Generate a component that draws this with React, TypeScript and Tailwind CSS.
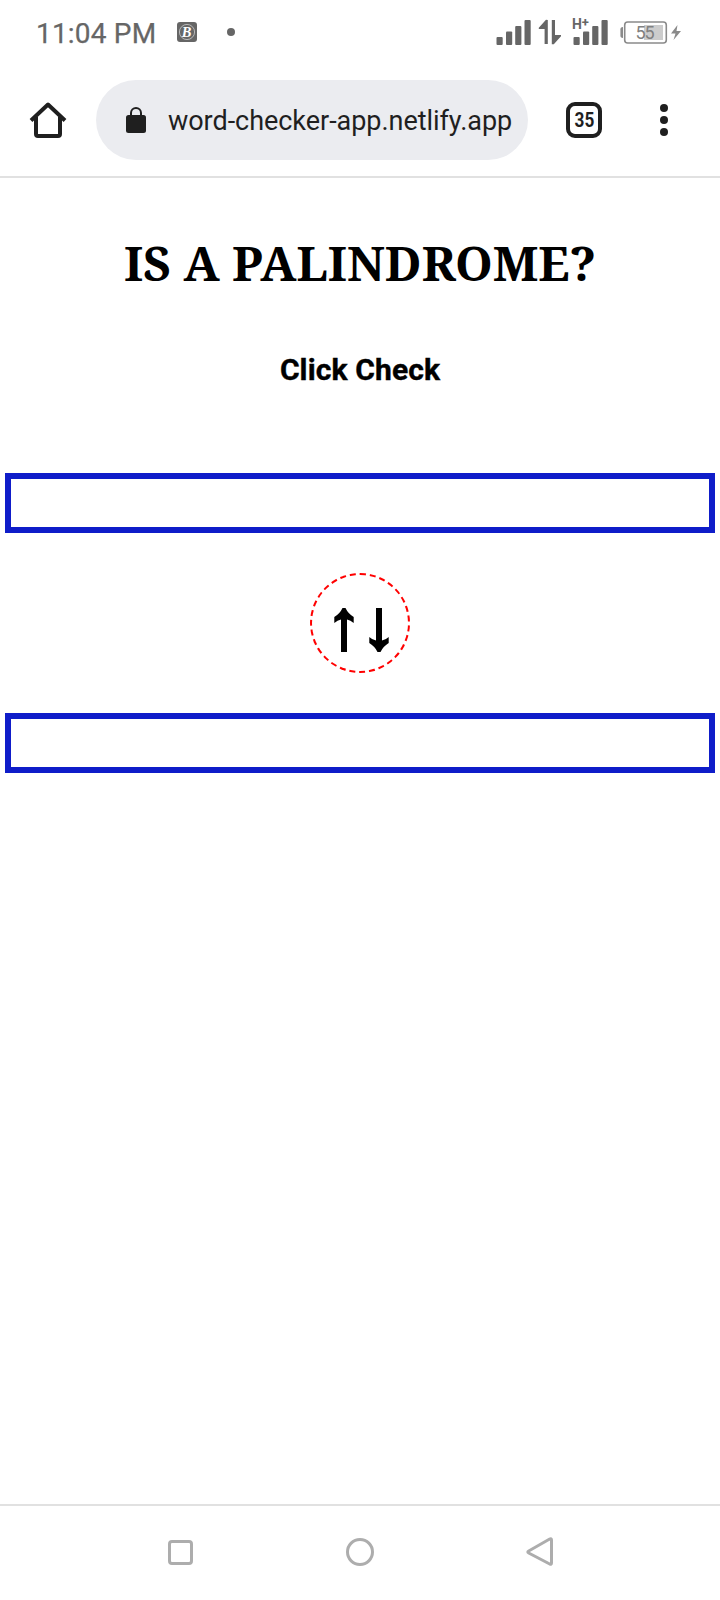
import React from "react";

function StatusBar() {
  return (
    <div className="flex h-16 items-center text-[#666]">
      <span className="ml-[36px] w-[121px] whitespace-nowrap pt-[3px] text-[28px] leading-[64px] tracking-[0.2px] [-webkit-text-stroke:0.25px_#666]">11:04 PM</span>
      <svg className="ml-[20px] shrink-0" width="20" height="64" viewBox="177 0 20 64">
        <rect x="177" y="22" width="20" height="20" rx="3" fill="#666" />
        <circle cx="187" cy="32" r="7.6" fill="none" stroke="#ccc" strokeWidth="0.8" />
        <text x="186.6" y="37" textAnchor="middle" fontSize="14.5" fontStyle="italic" fontWeight="bold" fontFamily="Liberation Serif, serif" fill="#fff">B</text>
      </svg>
      <span className="ml-[30px] h-2 w-2 rounded-full bg-[#666]" />
      <svg className="ml-[261px] shrink-0" width="36" height="64" viewBox="496 0 36 64" fill="#666">
        <SignalBars x={496.5} />
      </svg>
      <svg className="ml-[6px] shrink-0" width="24" height="64" viewBox="538 0 24 64" fill="#666">
        <path d="M547.8 20v24h-3.2V29h-5.8v-1.2l7.2-8zM551.8 20h3.2v15h6v1.2l-7.2 8h-2z" />
      </svg>
      <svg className="ml-[10px] shrink-0" width="38" height="64" viewBox="572 0 38 64" fill="#666">
        <SignalBars x={573.5} />
        <text x="572" y="29.3" fontSize="14" fontWeight="bold" fontFamily="Roboto, sans-serif">H</text>
        <text x="581.8" y="27" fontSize="13" fontWeight="bold" fontFamily="Roboto, sans-serif">+</text>
      </svg>
      <svg className="ml-[9px] shrink-0" width="64" height="64" viewBox="619 0 64 64" fill="#8a8a8a">
        <path d="M623 27v11c-2 0-2.6-1-2.6-2.5v-6c0-1.5.6-2.5 2.6-2.5z" />
        <rect x="624.7" y="22" width="41.6" height="21" rx="3" fill="#fff" stroke="#8a8a8a" strokeWidth="1.6" />
        <rect x="644" y="25" width="19" height="15" fill="#ccc" />
        <text x="635.5" y="39" fontSize="18" fontFamily="Roboto, sans-serif" textLength="19" fill="#808080">55</text>
        <path d="M677.5 25l-6.5 8.5h4.5l-2 6.5 7.5-9h-4.5z" />
      </svg>
    </div>
  );
}

function SignalBars({ x }: { x: number }) {
  return (
    <>
      <rect x={x} y="37" width="6.2" height="8" rx="1" />
      <rect x={x + 9.5} y="31.5" width="6.2" height="13.5" rx="1" />
      <rect x={x + 18.7} y="26" width="6.2" height="19" rx="1" />
      <rect x={x + 28} y="20" width="6.2" height="25" rx="1" />
    </>
  );
}

function Toolbar() {
  return (
    <div className="flex h-[114px] items-start border-b-2 border-[#e1e1e1] pt-4 text-[#1f1f1f]">
      <svg className="ml-[28px] shrink-0" width="40" height="80" viewBox="28 80 40 80" fill="none" stroke="#1f1f1f" strokeWidth="4" strokeLinejoin="round">
        <path d="M31 120.5L48 104.5L65 120.5M36 117v17q0 2 2 2h20q2 0 2-2V117" />
      </svg>
      <div className="ml-[28px] flex h-20 w-[432px] items-center rounded-full bg-[#ebecf0]">
        <svg className="ml-[30px] shrink-0" width="20" height="28" viewBox="0 0 20 28">
          <rect y="9" width="20" height="18" rx="2.5" fill="#1f1f1f" />
          <path d="M5 10V7a5 5 0 0 1 10 0v3" fill="none" stroke="#1f1f1f" strokeWidth="2" />
        </svg>
        <span className="ml-[22px] whitespace-nowrap pt-[2px] text-[27px] tracking-[-0.04px]">word-checker-app.netlify.app</span>
      </div>
      <div className="ml-[38px] mt-[22px] flex h-9 w-9 items-center justify-center rounded-[9px] border-4 border-[#1f1f1f] text-[20px] font-bold leading-none">
        <span className="inline-block scale-x-[0.86]">35</span>
      </div>
      <div className="ml-[58px] mt-[24px] flex flex-col gap-1">
        <span className="h-2 w-2 rounded-full bg-[#1f1f1f]" />
        <span className="h-2 w-2 rounded-full bg-[#1f1f1f]" />
        <span className="h-2 w-2 rounded-full bg-[#1f1f1f]" />
      </div>
    </div>
  );
}

export default function App() {
  return (
    <div className="flex h-[1600px] w-[720px] flex-col overflow-hidden bg-white font-['Roboto',sans-serif]">
      <StatusBar />
      <Toolbar />
      <main className="flex flex-1 flex-col items-center text-black">
        <h1 className="mt-[53px] h-[64px] whitespace-nowrap font-['Noto_Serif','Liberation_Serif',serif] text-[48px] font-bold leading-[64px]">IS A PALINDROME?</h1>
        <p className="mt-[55px] h-[40px] text-[30px] font-bold leading-[40px] tracking-[0.12px] [-webkit-text-stroke:0.4px_#000]">Click Check</p>
        <input className="mt-[83px] h-[60px] w-[710px] border-[6px] border-[#0f1dc9] outline-none" />
        <button className="mt-[40px] h-[100px] w-[100px] rounded-full border-2 border-dashed border-[#f00]">
          <svg width="96" height="96" viewBox="312 575 96 96">
            <path d="M341 652V619.5Q337.5 620 334.3 623V617Q340 613.5 342.5 608H345.5Q348 613.5 353.7 617V623Q350.5 620 347 619.5V652z" />
            <path d="M376 608V640.5Q372.5 640 369.3 637V643Q375 646.5 377.5 652H380.5Q383 646.5 388.7 643V637Q385.5 640 382 640.5V608z" />
          </svg>
        </button>
        <input className="mt-[40px] h-[60px] w-[710px] border-[6px] border-[#0f1dc9] outline-none" />
      </main>
      <nav className="h-24 border-t-2 border-[#e1e1e1]">
        <div className="flex h-[92px] items-center justify-center">
          <svg width="400" height="40" viewBox="160 1532 400 40" fill="none" stroke="#adadad" strokeWidth="3">
            <rect x="169.5" y="1541.5" width="22" height="22" rx="2.5" />
            <circle cx="360" cy="1552" r="12.5" />
            <path d="M551.5 1541v22q0 2-1.8 1l-21-11q-1.8-1 0-2l21-12q1.8-1 1.8 1z" />
          </svg>
        </div>
      </nav>
    </div>
  );
}
